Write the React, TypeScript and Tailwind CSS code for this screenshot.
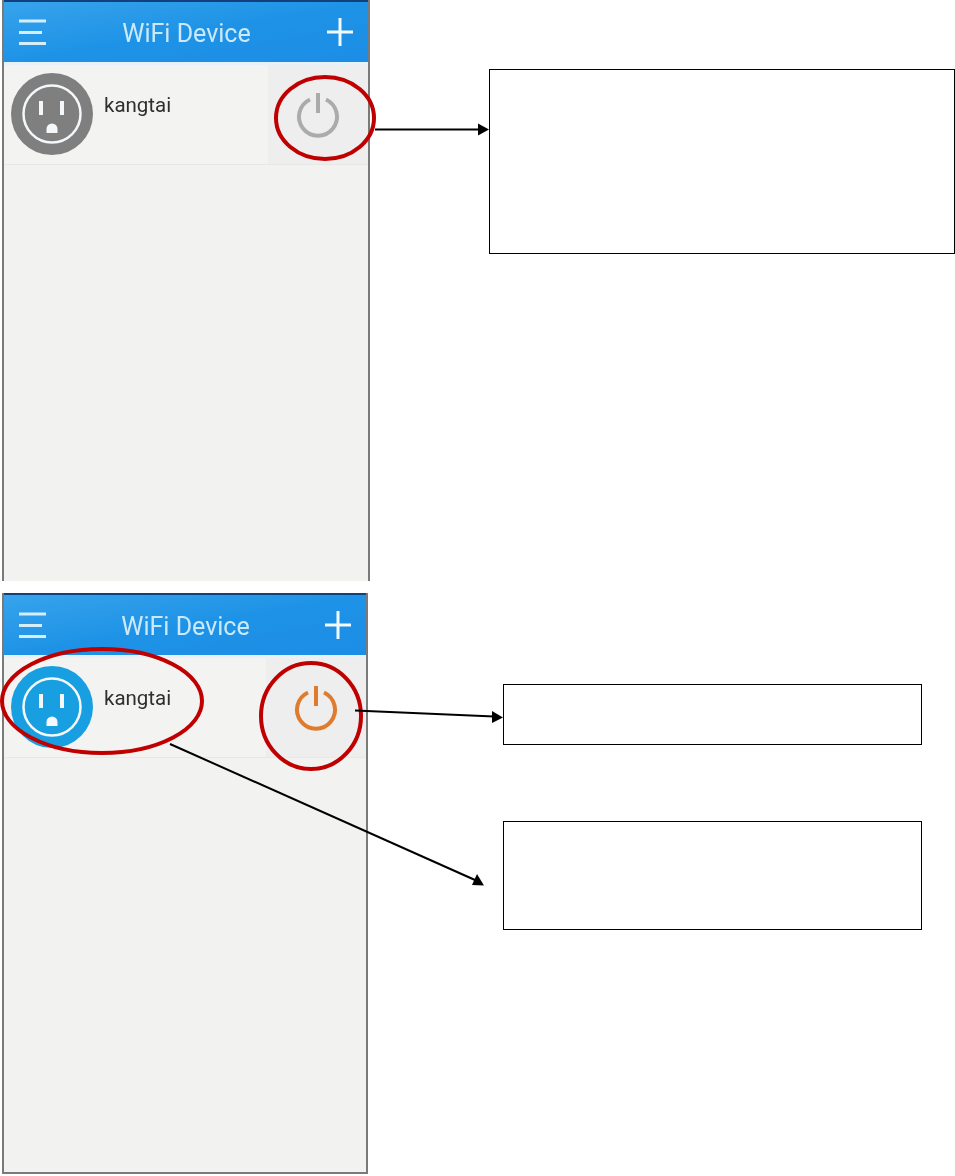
function Socket({ fill }: { fill: string }) {
    return (
        <svg width="84" height="84" viewBox="0 0 84 84" className="shrink-0 blur-[0.4px]">
            <circle cx="42" cy="42" r="41" fill={fill} />
            <circle cx="42" cy="42" r="28.500" fill="none" stroke="#f4f8fa" strokeWidth="2.500" />
            <rect x="29" y="29" width="4" height="14" fill="#f4f8fa" />
            <rect x="50" y="29" width="4" height="14" fill="#f4f8fa" />
            <path d="M36.500 61v-4a5.500 5.500 0 0 1 11 0v4z" fill="#f4f8fa" />
        </svg>
    );
}

function Power({ color }: { color: string }) {
    return (
        <svg width="48" height="50" viewBox="0 0 48 50" className="blur-[0.4px]">
            <path d="M16 8.500a19 19 0 1 0 16 0" fill="none" stroke={color} strokeWidth="4" />
            <path d="M24 2v20" fill="none" stroke={color} strokeWidth="4" />
        </svg>
    );
}

function Phone({ width, socket, power, bottom }: { width: string; socket: string; power: string; bottom?: boolean }) {
    return (
        <div className={`${width} h-[581px] ml-[2px] shrink-0 flex flex-col border-x-2 border-[#7a7a7a] bg-[#f2f2f0] ${bottom ? 'border-b-2' : ''}`}>
            {/* Title bar */}
            <div className="h-[62px] shrink-0 flex items-center justify-between pl-[13px] pr-[14px] border-t-2 border-[#12407c] bg-gradient-to-br from-[#36a3ec] via-[#1e93e6] to-[#1c8de6]">
                <svg width="30" height="28" viewBox="0 0 30 28" className="blur-[0.3px]">
                    <path d="M2 3h27M2 14.500h23M2 25.500h27" stroke="#d4eefc" strokeWidth="3" fill="none" />
                </svg>
                <span className="mt-[2px] font-['Roboto',sans-serif] text-[25px] leading-none text-[#cbe9fb] blur-[0.3px]">WiFi Device</span>
                <svg width="28" height="30" viewBox="0 0 28 30">
                    <path d="M14 1v28M1 15h26" stroke="#f2fafe" strokeWidth="3" fill="none" />
                </svg>
            </div>
            {/* Device row */}
            <div className="h-[103px] shrink-0 flex border-t-3 border-b border-t-[#e6f1f9] border-b-[#e8e8e6] bg-[#f3f3f1]">
                <div className="flex-1 flex items-start pl-[6px] pt-[7px]">
                    <Socket fill={socket} />
                    <span className="ml-[10px] mt-[21px] font-['Roboto',sans-serif] text-[20.500px] leading-[24px] text-[#2f2f2f] blur-[0.3px]">kangtai</span>
                </div>
                <div className="w-[100px] flex items-start pl-[26px] pt-[26px] bg-[#eeeeee]">
                    <Power color={power} />
                </div>
            </div>
        </div>
    );
}

function Note({ height }: { height: string }) {
    return <div className={`${height} border border-black bg-white`} />;
}

export default function App() {
    return (
        <div className="relative w-[955px] h-[1176px] overflow-hidden bg-white">
            {/* Off state */}
            <div className="flex h-[581px]">
                <Phone width="w-[368px]" socket="#7f7f7f" power="#ababab" />
                <div className="ml-[119px] mt-[69px] w-[466px] shrink-0">
                    <Note height="h-[185px]" />
                </div>
            </div>

            {/* On state */}
            <div className="flex mt-[12px] h-[581px]">
                <Phone width="w-[366px]" socket="#189fe2" power="#e07a2c" bottom />
                <div className="ml-[135px] mt-[91px] w-[419px] shrink-0 flex flex-col gap-[76px]">
                    <Note height="h-[61px]" />
                    <Note height="h-[109px]" />
                </div>
            </div>

            {/* Callout rings and arrows */}
            <svg width="955" height="1176" viewBox="0 0 955 1176" className="absolute inset-0 pointer-events-none">
                <g fill="none" stroke="#c00000" strokeWidth="4">
                    <ellipse cx="325" cy="118" rx="49" ry="41" />
                    <ellipse cx="102" cy="701" rx="100" ry="52" />
                    <ellipse cx="311" cy="716" rx="50" ry="53" />
                </g>
                <g fill="none" stroke="#000" strokeWidth="2">
                    <path d="M375 129.500H479" />
                    <path d="M355 710.500L494 716.500" />
                    <path d="M170 744L475 880" />
                </g>
                <path d="M478 123.500L489 129.500L478 135.500z" />
                <path d="M492 711L503 717.500L492 723z" />
                <path d="M484 885.500L472 885L477 874z" />
            </svg>
        </div>
    );
}
